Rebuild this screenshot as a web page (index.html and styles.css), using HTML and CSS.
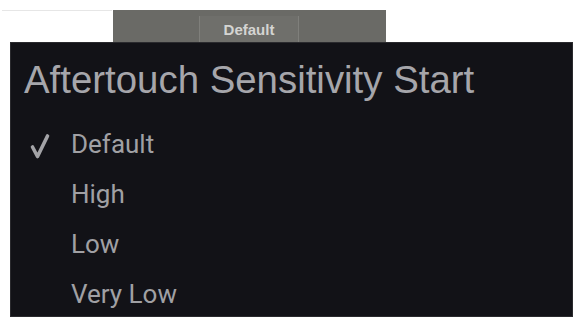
FILE: index.html
```html
<!DOCTYPE html>
<html>
<head>
<meta charset="utf-8">
<link rel="stylesheet" href="styles.css">
</head>
<body>
<div class="top">
  <div class="topline"></div>
  <div class="bar">
    <div class="tab">Default</div>
  </div>
</div>
<div class="panel">
  <div class="title">Aftertouch Sensitivity Start</div>
  <ul class="list">
    <li class="item"><span class="check"><svg class="tick" width="20" height="26" viewBox="0 0 20 26"><polyline points="2.5,14 7.5,23.5 17.5,3" fill="none" stroke="#a3a3a7" stroke-width="3.6" stroke-linecap="round" stroke-linejoin="round"/></svg></span><span class="label">Default</span></li>
    <li class="item"><span class="check"></span><span class="label">High</span></li>
    <li class="item"><span class="check"></span><span class="label">Low</span></li>
    <li class="item"><span class="check"></span><span class="label">Very Low</span></li>
  </ul>
</div>
</body>
</html>
```

FILE: styles.css
```css
html, body {
  margin: 0;
  padding: 0;
  background: #ffffff;
  width: 578px;
  height: 324px;
  overflow: hidden;
}
.top {
  display: flex;
  align-items: flex-start;
  padding-top: 10px;
  height: 32px;
}
.topline {
  width: 110px;
  margin-left: 2px;
  height: 1px;
  background: #e6e6e6;
}
.bar {
  margin-left: 1px;
  width: 273px;
  height: 32px;
  background: #6a6a66;
  display: flex;
  justify-content: flex-start;
  align-items: flex-end;
}
.tab {
  margin-left: 86px;
  width: 100px;
  height: 26px;
  background: #6f6f6b;
  border-left: 1px solid #7f7f7b;
  border-right: 1px solid #7f7f7b;
  color: #d4d4d2;
  font-family: "Liberation Sans", Arial, sans-serif;
  font-weight: bold;
  font-size: 15px;
  display: flex;
  justify-content: center;
  align-items: center;
  box-sizing: border-box;
}
.panel {
  margin-left: 10px;
  width: 563px;
  height: 275px;
  background: #121217;
  box-sizing: border-box;
  border: 1px solid #2a2a2e;
  padding: 15px 0 0 13px;
}
.title {
  font-family: "Liberation Sans", Arial, sans-serif;
  font-size: 38.4px;
  line-height: 44px;
  color: #a6a6ab;
}
.list {
  list-style: none;
  margin: 17px 0 0 0;
  padding: 0;
}
.item {
  display: flex;
  align-items: center;
  font-family: Roboto, "Noto Sans", sans-serif;
  font-size: 26px;
  font-weight: 400;
  line-height: 50px;
  color: #a0a0a4;
}
.check {
  width: 41px;
  margin-left: 6px;
  height: 50px;
  display: flex;
  align-items: center;
}
.tick {
  display: block;
  margin-top: 4px;
}
.label {
  display: block;
}
```
